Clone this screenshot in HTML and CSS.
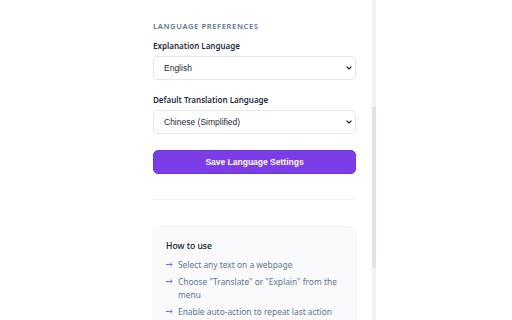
FILE: index.html
```html
<!DOCTYPE html>
<html>
<head>
<meta charset="utf-8">
<link rel="stylesheet" href="styles.css">
</head>
<body>
<div class="layout">
  <main class="panel">
    <section class="prefs">
      <h2 class="section-title">Language Preferences</h2>
      <div class="field">
        <label class="field-label">Explanation Language</label>
        <select class="select">
          <option>English</option>
        </select>
      </div>
      <div class="field">
        <label class="field-label">Default Translation Language</label>
        <select class="select">
          <option>Chinese (Simplified)</option>
        </select>
      </div>
      <button class="save-btn">Save Language Settings</button>
    </section>
    <hr class="divider">
    <section class="howto">
      <h3 class="howto-title">How to use</h3>
      <ul class="howto-list">
        <li><svg class="arrow" width="7" height="5" viewBox="0 0 7 5"><path d="M0 2.5H6.2M4.4 0.9L6.2 2.5L4.4 4.1" fill="none" stroke="#8b5cf6" stroke-width="1"/></svg><span>Select any text on a webpage</span></li>
        <li><svg class="arrow" width="7" height="5" viewBox="0 0 7 5"><path d="M0 2.5H6.2M4.4 0.9L6.2 2.5L4.4 4.1" fill="none" stroke="#8b5cf6" stroke-width="1"/></svg><span>Choose "Translate" or "Explain" from the menu</span></li>
        <li><svg class="arrow" width="7" height="5" viewBox="0 0 7 5"><path d="M0 2.5H6.2M4.4 0.9L6.2 2.5L4.4 4.1" fill="none" stroke="#8b5cf6" stroke-width="1"/></svg><span>Enable auto-action to repeat last action</span></li>
      </ul>
    </section>
  </main>
  <div class="scrollbar"><div class="thumb"></div></div>
</div>
</body>
</html>
```
FILE: styles.css
```css
* { box-sizing: border-box; }
html, body { margin: 0; padding: 0; background: #ffffff; }
body {
  font-family: "Noto Sans", "Open Sans", sans-serif;
  color: #1f2937;
  height: 320px;
  overflow: hidden;
}
.layout {
  display: flex;
  height: 320px;
  margin-left: 136px;
  width: 240px;
}
.panel {
  flex: 1;
  padding: 20px 16px 0 17px;
}
.section-title {
  margin: 0 0 8px;
  font-size: 7.6px;
  line-height: 12px;
  font-weight: 600;
  letter-spacing: 0.6px;
  text-transform: uppercase;
  color: #64748b;
}
.field { margin-bottom: 14px; }
.field-label {
  display: block;
  font-size: 8px;
  line-height: 12px;
  font-weight: 600;
  color: #1e293b;
  margin-bottom: 4px;
}
.select {
  display: block;
  width: 100%;
  height: 24px;
  padding: 0 14px 0 10px;
  font-family: "Liberation Sans", Arial, sans-serif;
  font-size: 8.5px;
  color: #1f2937;
  -webkit-appearance: none;
  appearance: none;
  background: #ffffff url("data:image/svg+xml,%3Csvg xmlns='http://www.w3.org/2000/svg' width='6' height='4' viewBox='0 0 6 4'%3E%3Cpath d='M0.6 0.6L3 3L5.4 0.6' fill='none' stroke='%23222' stroke-width='1.2'/%3E%3C/svg%3E") no-repeat right 3px center;
  border: 1px solid #e5e7eb;
  border-radius: 5px;
}
.save-btn {
  display: block;
  width: 100%;
  height: 24px;
  margin-top: 16px;
  border: 1px solid #6d35dc;
  border-radius: 5px;
  background: #7a3de8;
  color: #ffffff;
  font-family: "Liberation Sans", Arial, sans-serif;
  font-size: 8.5px;
  font-weight: 700;
}
.divider {
  border: 0;
  border-top: 1px solid #f1f3f6;
  margin: 25px 0 26px;
}
.howto {
  background: #f8fafc;
  border: 1px solid #f1f3f6;
  border-radius: 8px;
  padding: 12px;
}
.howto-title {
  margin: 0 0 5px;
  font-size: 8.6px;
  line-height: 14px;
  font-weight: 500;
  color: #0f172a;
}
.howto-list {
  list-style: none;
  margin: 0;
  padding: 0;
  display: flex;
  flex-direction: column;
  gap: 4px;
}
.howto-list li {
  display: flex;
  align-items: flex-start;
  gap: 5px;
  font-size: 8.4px;
  line-height: 13px;
  color: #64748b;
}
.arrow { flex: none; margin-top: 4px; }
.scrollbar {
  width: 4px;
  flex: none;
  background: #f1f1f4;
  padding-top: 107px;
}
.thumb {
  height: 161px;
  background: #e2e3e8;
}
```
